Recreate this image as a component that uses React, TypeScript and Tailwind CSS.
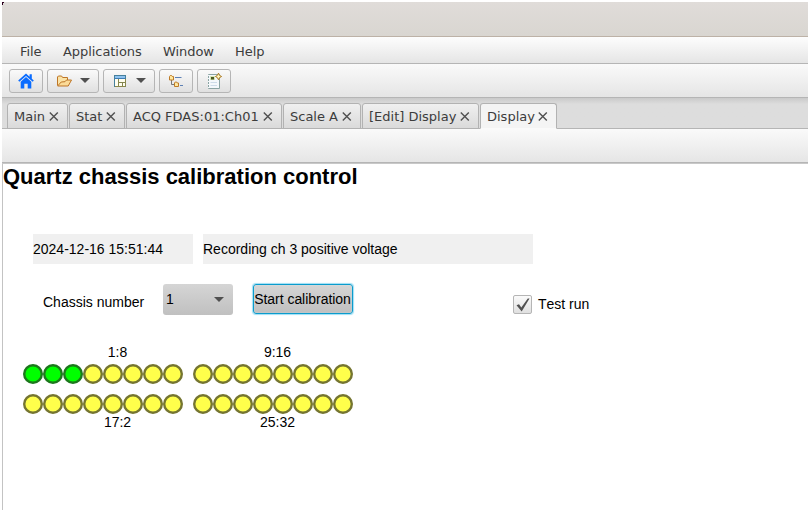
import React from "react";

const uiFont = "font-['DejaVu_Sans',sans-serif]";
const displayFont = "font-['Liberation_Sans',Arial,sans-serif]";

const menus = [
  { label: "File", box: "w-[43px]" },
  { label: "Applications", box: "w-[100px]" },
  { label: "Window", box: "w-[72px]" },
  { label: "Help", box: "w-[50px]" },
];

const tabs = [
  { label: "Main", box: "w-[61px]" },
  { label: "Stat", box: "w-[56px]" },
  { label: "ACQ FDAS:01:Ch01", box: "w-[156px]" },
  { label: "Scale A", box: "w-[78px]" },
  { label: "[Edit] Display", box: "w-[117px]" },
  { label: "Display", box: "w-[77px]", active: true },
];

function HomeIcon() {
  return (
    <svg width="16" height="16" viewBox="0 0 16 16" fill="#0a6cff">
      <path d="M8 0.4 L0.2 7.6 L1.3 8.8 L8 2.9 L14.7 8.8 L15.8 7.6 L13.8 5.7 V1.2 H11.6 V3.7 Z" />
      <path d="M8 4.1 L2.7 8.8 V15.4 H6.3 V10.8 H9.7 V15.4 H13.3 V8.8 Z" />
    </svg>
  );
}

function FolderIcon() {
  return (
    <svg width="16" height="16" viewBox="0 0 16 16" fill="none" stroke="#bd7526" strokeLinejoin="round">
      <path d="M1.5 12.5 V4 L2.4 3 H5.6 L6.6 4.5 H11.5 V7" fill="#fbe3a6" />
      <path d="M1.6 13 L5.2 9 L9 8.7 L10.5 7 H15.5 L12.2 13 Z" fill="#fbdb98" />
    </svg>
  );
}

function TableIcon() {
  return (
    <svg width="14" height="14" viewBox="0 0 14 14">
      <rect x="1.5" y="1.5" width="11" height="11" fill="#fffef0" stroke="#46809c" />
      <rect x="2" y="2" width="10" height="2.2" fill="#8dc2ef" />
      <path d="M2 4.5 H12" stroke="#3f7db5" />
      <path d="M5.5 5 V12 M5.5 8.5 H12 M9.5 8.5 V12" stroke="#84864f" />
      <path d="M2 12.5 H12.5 V5" stroke="#8b884b" fill="none" />
    </svg>
  );
}

function TreeIcon() {
  return (
    <svg width="16" height="16" viewBox="0 0 16 16" fill="none">
      <path d="M3.5 7 V11.5 H6" stroke="#777" />
      <path d="M1.5 7 V3.5 L2.3 2.5 H3.6 L4.3 3.5 H5.5 V7 Z" fill="#ffe8a0" stroke="#bd7b28" />
      <path d="M6.5 13.5 V10 L7.3 9 H8.6 L9.3 10 H10.5 V13.5 Z" fill="#ffe8a0" stroke="#bd7b28" />
      <path d="M7 4.5 H13.5 M12 12.5 H15" stroke="#5d80b5" strokeWidth="1.2" />
    </svg>
  );
}

function NewDisplayIcon() {
  return (
    <svg width="16" height="18" viewBox="0 0 16 18" fill="none">
      <path d="M2.5 2.5 H13.5 V16.5 H2.5 Z" fill="#f4f8fb" stroke="#8ba4a3" />
      <path d="M2.5 3 V16" stroke="#f4f8fb" strokeDasharray="1 2" />
      <path d="M4 4 H9 V8 H4 Z" fill="#d6e6b4" />
      <path d="M5 5 H8 V7.5 H5 Z" fill="#4b5720" />
      <path d="M4.5 10.5 H11 M4.5 13.5 H11" stroke="#cddbe8" />
      <path d="M12.5 1.2 L13.6 3.4 L15.6 4.5 L13.6 5.6 L12.5 7.8 L11.4 5.6 L9.4 4.5 L11.4 3.4 Z" fill="#fff7ba" stroke="#aa7923" />
    </svg>
  );
}

function Arrow() {
  return <span className="size-0 border-x-[5px] border-t-[5px] border-x-transparent border-t-[#505050]" />;
}

function ToolButton({ children, menu }: { children: React.ReactNode; menu?: boolean }) {
  return (
    <button
      className={`flex h-6 items-center rounded-[3px] border border-[#b5b5b5] bg-linear-to-b from-[#fafafa] to-[#e0e0e0] ${
        menu ? "w-[52px] justify-between pr-[8px] pl-[8px]" : "w-[34px] justify-center"
      }`}
    >
      {children}
      {menu && <Arrow />}
    </button>
  );
}

function Leds({ lit = 0 }: { lit?: number }) {
  return (
    <svg width="160" height="20" viewBox="0 0 160 20" className="block" strokeWidth="2.4">
      {Array.from({ length: 8 }, (_, i) => (
        <circle
          key={i}
          cx={10 + i * 20}
          cy="10"
          r="8.8"
          fill={i < lit ? "#00ff00" : "#ffff4b"}
          stroke={i < lit ? "#1c781c" : "#757530"}
        />
      ))}
    </svg>
  );
}

export default function App() {
  return (
    <div className="h-[512px] w-[810px] overflow-hidden bg-white p-[2px]">
      <div className="flex h-[508px] w-[806px] flex-col">
        <div className="h-[35px] shrink-0 border-b border-[#bdb2a7] bg-linear-to-b from-[#e0dcd9] to-[#d9d6d1]">
          <svg width="2" height="3" className="block" fill="#2c001e">
            <path d="M0 0 H2 V1 H1 V3 H0 Z" />
          </svg>
        </div>

        <nav className={`${uiFont} flex h-[27px] shrink-0 items-center border-b border-[#b5b5b5] bg-linear-to-b from-[#fdfdfd] to-[#e5e5e5] pt-[4px] pl-[18px] text-[13px] tracking-[-0.06px] text-[#3c3c3c]`}>
          {menus.map((m) => (
            <span key={m.label} className={m.box}>{m.label}</span>
          ))}
        </nav>

        <div className="flex h-[34px] shrink-0 items-center gap-1 border-b border-[#b5b5b5] bg-linear-to-b from-[#fafafa] to-[#e5e5e5] pl-[7px]">
          <ToolButton><HomeIcon /></ToolButton>
          <ToolButton menu><FolderIcon /></ToolButton>
          <ToolButton menu><span className="pl-[1px]"><TableIcon /></span></ToolButton>
          <ToolButton><TreeIcon /></ToolButton>
          <ToolButton><NewDisplayIcon /></ToolButton>
        </div>

        <div className={`${uiFont} flex h-[31px] shrink-0 items-end gap-px bg-[#dddddd] bg-linear-to-b from-[#cacaca] to-[#dddddd] to-20% pl-[5px] text-[13px] text-[#3c3c3c] shadow-[inset_0_-1px_0_#b5b5b5]`}>
          {tabs.map((t) => (
            <div
              key={t.label}
              className={`${t.box} flex h-[26px] items-center justify-between rounded-t-[3px] border border-[#b2b2b2] pt-[2px] pr-[8px] pl-[6px] whitespace-nowrap ${
                t.active ? "border-b-[#fafafa] bg-[#f4f4f4]" : "bg-linear-to-b from-[#f0f0f0] to-[#dadada]"
              }`}
            >
              <span>{t.label}</span>
              <svg width="10" height="9" viewBox="0 0 10 9" stroke="#505050" strokeWidth="1.4" className="mb-[2px]">
                <path d="M0.8 0.5 L8.8 8.5 M8.8 0.5 L0.8 8.5" />
              </svg>
            </div>
          ))}
        </div>

        <div className="h-[35px] shrink-0 border-b border-[#c8c8c8] bg-linear-to-b from-[#fafafa] to-[#e5e5e5] shadow-[inset_0_-1px_0_#b5b5b5]" />

        <main className={`${displayFont} flex-1 border-l border-[#c3c3c3] bg-white text-[14px] leading-4 text-black [font-kerning:none]`}>
          <h1 className="h-[70px] text-[22px] leading-[25px] font-bold whitespace-nowrap">Quartz chassis calibration control</h1>

          <div className="ml-[30px] flex gap-[10px]">
            <div className="flex h-[30px] w-40 items-center bg-[#f0f0f0]">2024-12-16 15:51:44</div>
            <div className="flex h-[30px] w-[330px] items-center bg-[#f0f0f0]">Recording ch 3 positive voltage</div>
          </div>

          <div className="mt-5 ml-[40px] flex h-[31px]">
            <span className="w-[120px] pt-[10px]">Chassis number</span>
            <div className="flex w-[70px] items-center justify-between rounded-[3px] bg-linear-to-b from-[#d5d5d5] to-[#c0c0c0] pr-[9px] pl-[3px]">
              <span className="pb-[2px]">1</span>
              <Arrow />
            </div>
            <button className="ml-[20px] flex h-[30px] w-[100px] items-center justify-center rounded-[3px] border border-[#0b9ccd] bg-linear-to-b from-[#d5d5d5] to-[#c0c0c0] pr-[1px] tracking-[-0.04px] whitespace-nowrap shadow-[0_0_1px_1px_#9fdff5,inset_0_0_1px_#d0f0fa]">
              Start calibration
            </button>
            <label className="ml-[160px] flex items-center gap-[6px] pt-[10px] whitespace-nowrap">
              <span className="flex size-[19px] items-center justify-center rounded-[2px] border border-[#b5b5b5] bg-linear-to-b from-[#fafafa] to-[#e0e0e0]">
                <svg width="14" height="14" viewBox="0 0 14 14">
                  <path d="M0.5 7.3 L3 6.2 L5.3 9.4 L11.8 0.6 L13.5 0.6 L5.7 13.5 Z" fill="#505050" />
                </svg>
              </span>
              <span className="pb-[2px]">Test run</span>
            </label>
          </div>

          <div className="mt-[29px] ml-[20px] grid w-[330px] grid-cols-2 gap-x-[10px] text-center">
            <span className="h-5 pl-[29px]">1:8</span>
            <span className="h-5 pl-[9px]">9:16</span>
            <Leds lit={3} />
            <Leds />
            <div className="mt-[10px]"><Leds /></div>
            <div className="mt-[10px]"><Leds /></div>
            <span className="pl-[29px]">17:2</span>
            <span className="pl-[9px]">25:32</span>
          </div>
        </main>
      </div>
    </div>
  );
}
